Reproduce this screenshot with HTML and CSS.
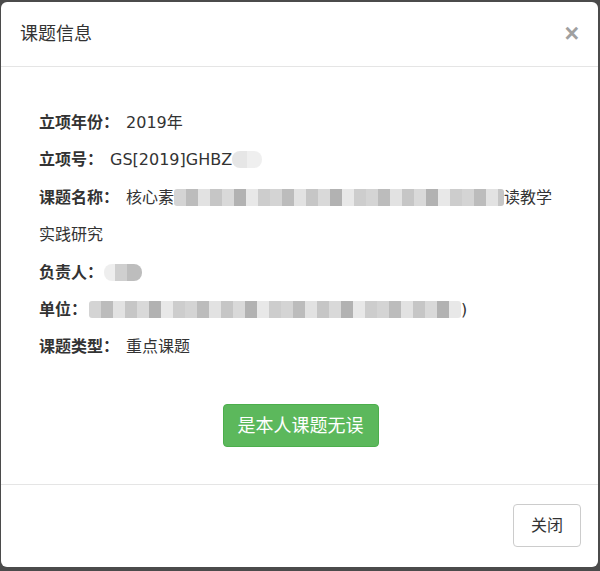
FILE: index.html
```html
<!DOCTYPE html>
<html lang="zh-CN">
<head>
<meta charset="utf-8">
<title>课题信息</title>
<link rel="stylesheet" href="styles.css">
</head>
<body>
<div class="modal">
  <div class="modal-header">
    <h4 class="modal-title">课题信息</h4>
    <span class="close">×</span>
  </div>
  <div class="modal-body">
    <p class="row"><b>立项年份：</b>2019年</p>
    <p class="row"><b>立项号：</b>GS[2019]GHBZ<span class="blob b-num"></span></p>
    <p class="row"><b>课题名称：</b>核心素<span class="mosaic m-name"></span>读教学实践研究</p>
    <p class="row"><b>负责人：</b><span class="blob b-person"></span></p>
    <p class="row"><b>单位：</b><span class="mosaic m-unit"></span>)</p>
    <p class="row"><b>课题类型：</b>重点课题</p>
    <div class="actions">
      <button class="btn btn-success">是本人课题无误</button>
    </div>
  </div>
  <div class="modal-footer">
    <button class="btn btn-default">关闭</button>
  </div>
</div>
</body>
</html>
```
FILE: styles.css
```css
* { box-sizing: border-box; }
html, body { margin: 0; padding: 0; }
body {
  background: #4b4b4b;
  width: 600px;
  height: 571px;
  overflow: hidden;
  font-family: "DejaVu Sans", "Noto Sans CJK SC", sans-serif;
  color: #333;
}
.modal {
  margin: 2px 2px 0 1px;
  width: 597px;
  height: 565px;
  background: #fff;
  border-radius: 6px;
  display: flex;
  flex-direction: column;
}
.modal-header {
  display: flex;
  align-items: center;
  justify-content: space-between;
  padding: 18px 20px 22px 19px;
  border-bottom: 1px solid #e5e5e5;
  height: 65px;
}
.modal-title {
  margin: 0;
  font-family: "Noto Sans CJK SC", sans-serif;
  font-size: 18px;
  font-weight: normal;
  line-height: 22px;
  color: #333;
}
.close {
  font-family: "Liberation Sans", sans-serif;
  font-size: 25px;
  font-weight: bold;
  color: #a0a0a0;
  line-height: 22px;
  margin-right: -1px;
  margin-top: 2px;
}
.modal-body {
  flex: 1;
  padding: 37px 38px 0 38px;
  font-size: 16px;
  line-height: 37.4px;
}
.row { margin: 0; }
.row b {
  font-weight: bold;
  margin-right: 7px;
}
.blob, .mosaic {
  display: inline-block;
  height: 17px;
  vertical-align: -3px;
  border-radius: 8px;
}
.b-num {
  width: 30px;
  background: linear-gradient(90deg, #e6e6e6 0 50%, #efefef 50% 100%);
}
.b-person {
  width: 38px;
  margin-left: -6px;
  background: linear-gradient(90deg, #eeeeee 0 30%, #cfcfcf 30% 60%, #bdbdbd 60% 100%);
}
.mosaic {
  border-radius: 3px;
  background: repeating-linear-gradient(90deg,
    #d4d4d4 0 12px, #bcbcbc 12px 24px, #e2e2e2 24px 36px,
    #c6c6c6 36px 48px, #d9d9d9 48px 60px, #b2b2b2 60px 72px,
    #e8e8e8 72px 84px, #cdcdcd 84px 96px);
}
.m-name { width: 330px; }
.m-unit { width: 372px; margin-left: -5px; }
.actions {
  display: flex;
  justify-content: center;
  padding-top: 38px;
  padding-bottom: 36px;
}
.btn {
  font-family: "Noto Sans CJK SC", sans-serif;
  border: 1px solid transparent;
  border-radius: 4px;
  cursor: pointer;
}
.btn-success {
  background: #5cb85c;
  border-color: #4cae4c;
  color: #fff;
  font-size: 18px;
  line-height: 23px;
  padding: 8px 14px 10px;
  margin-left: 2px;
}
.modal-footer {
  border-top: 1px solid #e5e5e5;
  display: flex;
  justify-content: flex-end;
  padding: 19px 17px 19px 20px;
  height: 83px;
}
.btn-default {
  background: #fff;
  border-color: #ccc;
  color: #333;
  font-size: 16px;
  line-height: 23px;
  padding: 8px 17px 10px;
  height: 43px;
}
```
